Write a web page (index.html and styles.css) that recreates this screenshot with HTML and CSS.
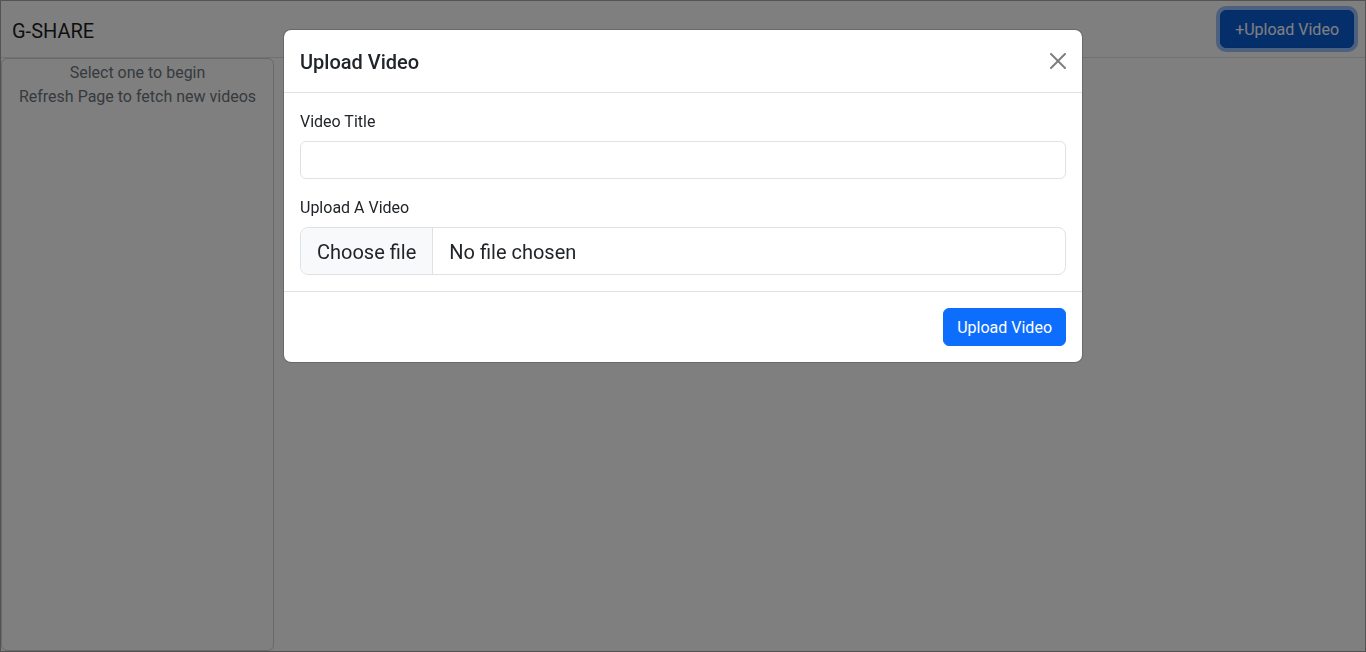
FILE: index.html
```html
<!DOCTYPE html>
<html lang="en">
<head>
<meta charset="utf-8">
<title>G-SHARE</title>
<link rel="stylesheet" href="styles.css">
</head>
<body>
<div class="app">
  <header class="topbar">
    <span class="brand">G-SHARE</span>
    <button class="btn btn-primary btn-focus" type="button">+Upload Video</button>
  </header>
  <div class="content">
    <aside class="sidebar">
      <div class="sidebar-msg">Select one to begin</div>
      <div class="sidebar-msg">Refresh Page to fetch new videos</div>
    </aside>
    <main class="main"></main>
  </div>
</div>

<div class="backdrop"></div>
<div class="modal">
  <div class="modal-dialog">
    <div class="modal-header">
      <h5 class="modal-title">Upload Video</h5>
      <button class="btn-close" type="button" aria-label="Close">
        <svg viewBox="0 0 16 16" width="16" height="16"><path d="M.293.293a1 1 0 0 1 1.414 0L8 6.586 14.293.293a1 1 0 1 1 1.414 1.414L9.414 8l6.293 6.293a1 1 0 0 1-1.414 1.414L8 9.414l-6.293 6.293a1 1 0 0 1-1.414-1.414L6.586 8 .293 1.707a1 1 0 0 1 0-1.414z"/></svg>
      </button>
    </div>
    <div class="modal-body">
      <div class="field field-spaced">
        <label class="form-label" for="title">Video Title</label>
        <input class="form-control" id="title" type="text">
      </div>
      <div class="field">
        <label class="form-label" for="file">Upload A Video</label>
        <label class="file-control" for="file">
          <span class="file-btn">Choose file</span>
          <span class="file-name">No file chosen</span>
        </label>
        <input class="visually-hidden" id="file" type="file">
      </div>
    </div>
    <div class="modal-footer">
      <button class="btn btn-primary btn-footer" type="button">Upload Video</button>
    </div>
  </div>
</div>
</body>
</html>
```
FILE: styles.css
```css
*,*::before,*::after{box-sizing:border-box}
html,body{height:100%}
body{
  margin:0;
  font-family:Roboto,"Liberation Sans",sans-serif;
  font-size:16px;
  line-height:1.5;
  color:#212529;
  background:#fff;
  overflow:hidden;
}
.app{
  height:100%;
  display:flex;
  flex-direction:column;
  border:1px solid #a6a6a6;
}
.topbar{
  height:57px;
  flex:none;
  display:flex;
  align-items:center;
  justify-content:space-between;
  padding:0 11px 1px 11px;
  border-bottom:1px solid #dee2e6;
}
.brand{
  font-size:20px;
  color:rgba(0,0,0,.9);
  line-height:30px;
  padding-top:4px;
}
.btn{
  font-family:inherit;
  font-size:16px;
  line-height:24px;
  padding:7px 12px 5px;
  border:1px solid transparent;
  border-radius:6px;
  cursor:pointer;
}
.btn-primary{
  color:#fff;
  background:#0d6efd;
  border-color:#0d6efd;
}
.btn-focus{
  padding:7px 14px 5px;
  background:#0b5ed7;
  border-color:#0a58ca;
  box-shadow:0 0 0 4px rgba(49,132,253,.5);
}
.btn-footer{padding:7px 13px 5px}
.content{
  flex:1;
  display:flex;
  min-height:0;
}
.sidebar{
  width:273px;
  flex:none;
  border:1px solid rgba(0,0,0,.175);
  border-radius:6px;
  padding-top:2px;
  text-align:center;
  color:#6c757d;
}
.main{flex:1}

.backdrop{
  position:fixed;
  inset:0;
  background:rgba(0,0,0,.5);
  z-index:10;
}
.modal{
  position:fixed;
  inset:0;
  z-index:20;
}
.modal-dialog{
  width:800px;
  margin:29px auto 0;
  background:#fff;
  border:1px solid rgba(0,0,0,.175);
  border-radius:8px;
  background-clip:padding-box;
}
.modal-header{
  display:flex;
  align-items:center;
  padding:17px 16px 15px;
  border-bottom:1px solid #dee2e6;
}
.modal-title{
  margin:0;
  font-size:20px;
  font-weight:500;
  line-height:30px;
  color:#212529;
}
.btn-close{
  margin-left:auto;
  margin-top:-2px;
  width:16px;
  height:16px;
  padding:0;
  border:0;
  background:transparent;
  opacity:.5;
  display:flex;
  cursor:pointer;
}
.btn-close svg{fill:#000;display:block}
.modal-body{padding:16px}
.field-spaced{margin-bottom:16px}
.form-label{
  display:block;
  padding-top:1px;
  margin-bottom:7px;
  line-height:24px;
}
.form-control{
  display:block;
  width:100%;
  height:38px;
  padding:6px 12px;
  font-family:inherit;
  font-size:16px;
  line-height:24px;
  color:#212529;
  background:#fff;
  border:1px solid #dee2e6;
  border-radius:6px;
}
.file-control{
  display:flex;
  height:48px;
  font-size:20px;
  line-height:30px;
  color:#212529;
  border:1px solid #dee2e6;
  border-radius:8px;
  overflow:hidden;
  cursor:pointer;
}
.file-btn{
  padding:9px 16px 7px;
  background:#f8f9fa;
  border-right:1px solid #dee2e6;
}
.file-name{
  padding:9px 16px 7px;
}
.visually-hidden{
  position:absolute;
  width:1px;
  height:1px;
  margin:-1px;
  padding:0;
  overflow:hidden;
  clip:rect(0,0,0,0);
  border:0;
}
.modal-footer{
  display:flex;
  justify-content:flex-end;
  padding:12px;
  border-top:1px solid #dee2e6;
}
.modal-footer .btn{margin:4px}
```
